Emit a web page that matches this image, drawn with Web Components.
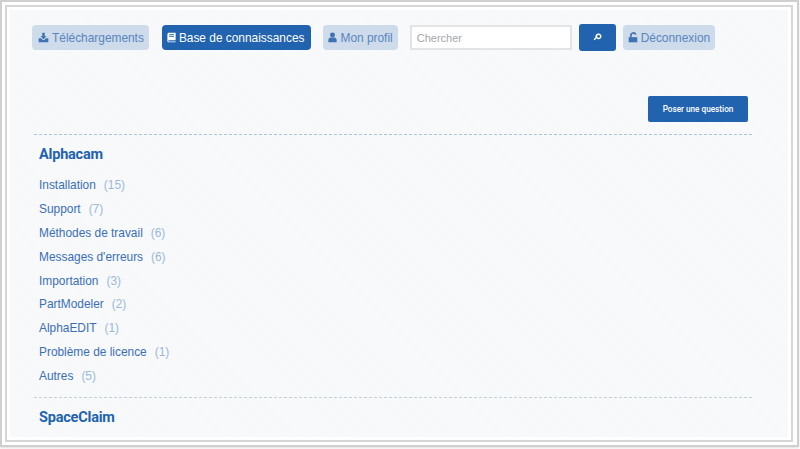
<!DOCTYPE html>
<html lang="fr">
<head>
<meta charset="utf-8">
<title>Base de connaissances</title>
<style>
  html, body { margin: 0; padding: 0; background: #fff; }
  body { width: 800px; height: 449px; overflow: hidden; font-family: "Liberation Sans", Arial, sans-serif; }
</style>
</head>
<body>
<kb-frame>
  <kb-toolbar>
    <kb-button icon="download" style="--gap:3px;padding-left:6px;padding-right:5px">Téléchargements</kb-button>
    <kb-button icon="book" active style="margin-left:13px;padding-right:7px">Base de connaissances</kb-button>
    <kb-button icon="user" style="margin-left:12px">Mon profil</kb-button>
    <kb-search style="margin-left:12px"></kb-search>
    <kb-button icon="unlock" style="margin-left:7px;padding-left:5px">Déconnexion</kb-button>
  </kb-toolbar>
  <kb-ask>Poser une question</kb-ask>
  <kb-section title="Alphacam">
    <kb-item count="15">Installation</kb-item>
    <kb-item count="7">Support</kb-item>
    <kb-item count="6">Méthodes de travail</kb-item>
    <kb-item count="6">Messages d'erreurs</kb-item>
    <kb-item count="3">Importation</kb-item>
    <kb-item count="2">PartModeler</kb-item>
    <kb-item count="1">AlphaEDIT</kb-item>
    <kb-item count="1">Problème de licence</kb-item>
    <kb-item count="5">Autres</kb-item>
  </kb-section>
  <kb-section title="SpaceClaim" second></kb-section>
</kb-frame>

<script>
const ICONS = {
  download: '<path d="M6.2 1h3.6v5h2.7L8 10.4 3.5 6h2.7z"/><path d="M1 9.2h3.4L7 11.8h2l2.6-2.6H15V15H1z"/>',
  book: '<path d="M2 3.2C2 2 3 1 4.2 1H14v11H4.2c-.7 0-1 .4-1 .8s.3.9 1 .9H14V15H4C2.9 15 2 14.1 2 13zM4.6 3.4v1.4h7V3.4zM4.6 6v1.3h7V6z" fill-rule="evenodd"/>',
  user: '<circle cx="8" cy="4.4" r="3.6"/><path d="M2 15v-3.2C2 9.6 3.6 8 5.4 8h5.2c1.8 0 3.4 1.6 3.4 3.8V15z"/>',
  unlock: '<path d="M1 7.5h12.5V15H1z"/><path d="M4.2 8V5a3.6 3.6 0 0 1 7-1.2" fill="none" stroke="currentColor" stroke-width="2.4"/>',
  search: '<path fill-rule="evenodd" d="M10 1a5 5 0 1 1-3.6 8.4L3 13 1 11l3.6-3.6A5 5 0 0 1 10 1zm0 2.4a2.6 2.6 0 1 0 0 5.2 2.6 2.6 0 0 0 0-5.2z"/>'
}

class KbFrame extends HTMLElement {
  constructor () {
    super()
    this.attachShadow({ mode: 'open' }).innerHTML = `
      <style>
        :host { display: block; width: 800px; height: 449px; box-sizing: border-box; padding: 0 1px 2px 0; }
        .outer { box-sizing: border-box; height: 100%; border: 2px solid #cfcfcf; padding: 3px 4px 3px 3px; box-shadow: 0 1px 2px #ddd; }
        .inner { box-sizing: border-box; height: 100%; border: 2px solid #d6d6d6; padding: 3px 3px 3px 3px; }
        .page {
          box-sizing: border-box; height: 100%; overflow: hidden; padding: 14px 36px 0 22px;
          background-color: #f6f8fa;
          background-image: repeating-linear-gradient(45deg, rgba(255,255,255,.35) 0 1px, transparent 1px 3px);
        }
      </style>
      <div class="outer"><div class="inner"><div class="page"><slot></slot></div></div></div>`
  }
}

class KbToolbar extends HTMLElement {
  constructor () {
    super()
    this.attachShadow({ mode: 'open' }).innerHTML = `
      <style>
        :host { display: flex; align-items: center; height: 27px; }
      </style>
      <slot></slot>`
  }
}

class KbButton extends HTMLElement {
  constructor () {
    super()
    const icon = ICONS[this.getAttribute('icon')] || ''
    this.attachShadow({ mode: 'open' }).innerHTML = `
      <style>
        :host { display: flex; align-items: center; height: 25px; box-sizing: border-box; padding: 0 5px 0 4px; border-radius: 4px;
          background: #cddbeb; color: #5a85bd; font-size: 11.9px; white-space: nowrap; cursor: pointer; }
        :host([active]) { background: #2163ae; color: #fff; }
        svg { width: 11px; height: 11px; margin-right: var(--gap, 2px); fill: currentColor; }
        :host(:not([active])) svg { color: #3f72b2; }
      </style>
      <svg viewBox="0 0 16 16">${icon}</svg><slot></slot>`
  }
}

class KbSearch extends HTMLElement {
  constructor () {
    super()
    this.attachShadow({ mode: 'open' }).innerHTML = `
      <style>
        :host { display: flex; align-items: center; gap: 7px; }
        input { box-sizing: border-box; width: 162px; height: 25px; padding: 0 5px; border: 2px solid #e2e4e6; outline: 0;
          background: #fff; font: 11px "Liberation Sans", Arial, sans-serif; color: #555; }
        input::placeholder { color: #a3a7ab; opacity: 1; }
        button { display: flex; align-items: center; justify-content: center; width: 37px; height: 27px; padding: 0; border: 0;
          border-radius: 3px; background: #2163ae; color: #fff; }
        svg { width: 9px; height: 9px; fill: currentColor; }
      </style>
      <input type="text" placeholder="Chercher">
      <button aria-label="Chercher"><svg viewBox="0 0 16 16">${ICONS.search}</svg></button>`
  }
}

class KbAsk extends HTMLElement {
  constructor () {
    super()
    this.attachShadow({ mode: 'open' }).innerHTML = `
      <style>
        :host { display: flex; justify-content: flex-end; padding: 45px 4px 12px 0; }
        a { display: flex; align-items: center; justify-content: center; box-sizing: border-box; width: 100px; height: 26px;
          border-radius: 2px; background: #2163ae; color: #fff; font: 500 8.2px Roboto, sans-serif; }
      </style>
      <a><slot></slot></a>`
  }
}

class KbSection extends HTMLElement {
  constructor () {
    super()
    const title = this.getAttribute('title')
    this.attachShadow({ mode: 'open' }).innerHTML = `
      <style>
        :host { display: block; margin-left: 2px; border-top: 1px dashed #a9c4de; padding: 0 0 0 5px; }
        :host([second]) { border-top-color: #c6cfd8; }
        h2 { margin: 0; padding-top: 11px; height: 24px; font: 700 14.5px/18px Roboto, sans-serif; color: #2163ae; letter-spacing: -.2px; }
        .list { display: flex; flex-direction: column; padding-top: 3px; padding-bottom: 9px; }
      </style>
      <h2>${title}</h2>
      <div class="list"><slot></slot></div>`
  }
}

class KbItem extends HTMLElement {
  constructor () {
    super()
    const count = this.getAttribute('count')
    this.attachShadow({ mode: 'open' }).innerHTML = `
      <style>
        :host { display: flex; align-items: center; height: 23.9px; font-size: 11.9px; color: #3a6fb5; }
        span { margin-left: 8px; color: #9db8d8; }
      </style>
      <slot></slot><span>(${count})</span>`
  }
}

customElements.define('kb-frame', KbFrame)
customElements.define('kb-toolbar', KbToolbar)
customElements.define('kb-button', KbButton)
customElements.define('kb-search', KbSearch)
customElements.define('kb-ask', KbAsk)
customElements.define('kb-section', KbSection)
customElements.define('kb-item', KbItem)
</script>
</body>
</html>
